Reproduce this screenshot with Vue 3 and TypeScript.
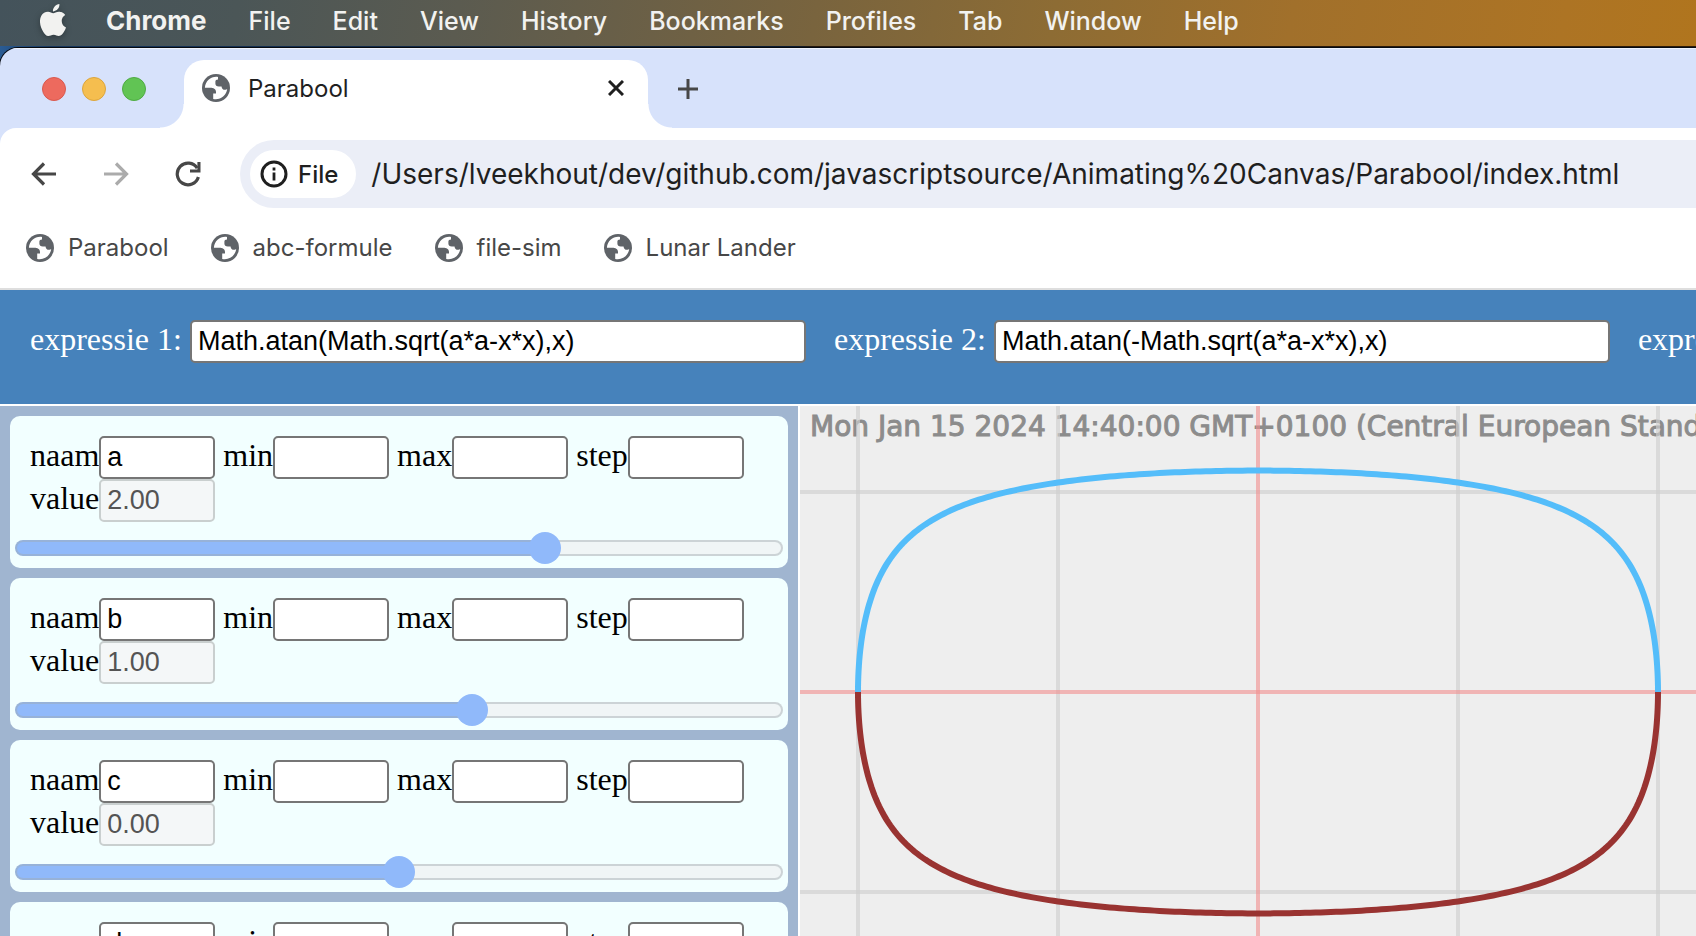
<script setup lang="ts">
import { ref, computed } from 'vue'

interface Param {
  naam: string
  value: number
}

const menus = ['File', 'Edit', 'View', 'History', 'Bookmarks', 'Profiles', 'Tab', 'Window', 'Help']
const bookmarks = ['Parabool', 'abc-formule', 'file-sim', 'Lunar Lander']
const url = ref('/Users/lveekhout/dev/github.com/javascriptsource/Animating%20Canvas/Parabool/index.html')
const expressions = ref<string[]>(['Math.atan(Math.sqrt(a*a-x*x),x)', 'Math.atan(-Math.sqrt(a*a-x*x),x)', ''])
const params = ref<Param[]>([
  { naam: 'a', value: 2 },
  { naam: 'b', value: 1 },
  { naam: 'c', value: 0 },
  { naam: 'd', value: 0 },
])
const timestamp = 'Mon Jan 15 2024 14:40:00 GMT+0100 (Central European Standard Time)'

const originX = 458
const originY = 286
const unit = 200
const steps = [-2, -1, 1, 2]

function curve(sign: number, a: number): string {
  const points: string[] = []
  const count = 240
  for (let i = 0; i <= count; i++) {
    const t = Math.PI * (1 - i / count)
    const x = a * Math.cos(t)
    const y = sign * Math.atan(Math.abs(a * Math.sin(t)))
    points.push(`${(originX + x * unit).toFixed(2)},${(originY - y * unit).toFixed(2)}`)
  }
  return points.join(' ')
}

const upper = computed(() => curve(1, params.value[0].value))
const lower = computed(() => curve(-1, params.value[0].value))

function fill(value: number): Record<string, string> {
  return { '--fill': `${(value + 5) * 10}%` }
}
</script>

<template>
  <svg class="defs" aria-hidden="true">
    <symbol id="globe" viewBox="0 0 28 28">
      <circle cx="14" cy="14" r="14" fill="#5f6368" />
      <path
        fill="#fff"
        d="M16 3C9.500 2 3.500 6.500 2.900 13.800H8.500C11.200 13.800 14 15 14 18V19.600H11.200V24.900C18 26.500 24.500 21.500 25.200 15C24.800 15.200 22.400 16.800 20.600 14.900C19.800 14 19.600 13.200 19.600 12.600H16.800C14.600 12.600 13.400 11.200 13.400 9.800V7.400C13.400 6.400 14.400 5.800 16 5.600Z"
      />
    </symbol>
  </svg>
  <div class="desktop">
    <nav class="menubar" aria-label="Menu bar">
      <svg class="apple" viewBox="2.300 0 19.400 24" aria-label="Apple">
        <path
          d="M12.152 6.896c-.948 0-2.415-1.078-3.96-1.04-2.04.027-3.91 1.183-4.961 3.014-2.117 3.675-.546 9.103 1.519 12.09 1.013 1.454 2.208 3.09 3.792 3.039 1.52-.065 2.09-.987 3.935-.987 1.831 0 2.35.987 3.96.948 1.637-.026 2.676-1.48 3.676-2.948 1.156-1.688 1.636-3.325 1.662-3.415-.039-.013-3.182-1.221-3.22-4.857-.026-3.04 2.48-4.494 2.597-4.559-1.429-2.09-3.623-2.324-4.39-2.376-2-.156-3.675 1.09-4.61 1.09zM15.53 3.83c.843-1.012 1.4-2.427 1.245-3.83-1.207.052-2.662.805-3.532 1.818-.78.896-1.454 2.338-1.273 3.714 1.338.104 2.715-.688 3.559-1.701"
        />
      </svg>
      <div class="menus">
        <button class="menu app-name" type="button">Chrome</button>
        <button v-for="m in menus" :key="m" class="menu" type="button">{{ m }}</button>
      </div>
    </nav>

    <div class="backdrop">
      <div class="window">
        <header class="tabstrip">
          <div class="lights">
            <button type="button" class="light red" aria-label="Close window"></button>
            <button type="button" class="light yellow" aria-label="Minimize window"></button>
            <button type="button" class="light green" aria-label="Zoom window"></button>
          </div>
          <span class="flare left"></span>
          <div class="tab">
            <svg class="favicon" aria-hidden="true"><use href="#globe" /></svg>
            <span class="tab-title">Parabool</span>
            <button type="button" class="icon-button" aria-label="Close tab">
              <svg width="16" height="16" viewBox="0 0 16 16"><path d="M1 1L15 15M15 1L1 15" stroke="#1f1f1f" stroke-width="3" /></svg>
            </button>
          </div>
          <span class="flare right"></span>
          <button type="button" class="icon-button new-tab" aria-label="New tab">
            <svg width="20" height="20" viewBox="0 0 20 20"><path d="M10 0V20M0 10H20" stroke="#474747" stroke-width="3" /></svg>
          </button>
        </header>

        <div class="chrome-body">
          <div class="toolbar">
            <button type="button" class="icon-button" aria-label="Back">
              <svg width="26" height="24" viewBox="0 0 26 24"><path d="M25 12H3M13 1.500L2.500 12L13 22.500" fill="none" stroke="#474747" stroke-width="3.200" /></svg>
            </button>
            <button type="button" class="icon-button" aria-label="Forward" disabled>
              <svg width="26" height="24" viewBox="0 0 26 24"><path d="M1 12H23M13 1.500L23.500 12L13 22.500" fill="none" stroke="#ababab" stroke-width="3.200" /></svg>
            </button>
            <button type="button" class="icon-button" aria-label="Reload">
              <svg width="26" height="26" viewBox="0 0 26 26">
                <path d="M22.200 7.200A10.800 10.800 0 1 0 23.400 16" fill="none" stroke="#474747" stroke-width="3.200" />
                <path d="M25.500 1V11.500H15V8.500H22.400V1Z" fill="#474747" />
              </svg>
            </button>
            <div class="omnibox">
              <button type="button" class="chip">
                <svg width="28" height="28" viewBox="0 0 28 28">
                  <circle cx="14" cy="14" r="12" fill="none" stroke="#1f1f1f" stroke-width="3" />
                  <path d="M14 12.500V20.500M14 7.500V10.500" stroke="#1f1f1f" stroke-width="2.800" />
                </svg>
                <span>File</span>
              </button>
              <input v-model="url" class="url" type="text" aria-label="Address" />
            </div>
          </div>
          <nav class="bookmarks" aria-label="Bookmarks">
            <a v-for="b in bookmarks" :key="b" class="bookmark" href="#">
              <svg class="favicon" aria-hidden="true"><use href="#globe" /></svg>
              <span>{{ b }}</span>
            </a>
          </nav>
        </div>

        <main class="page">
          <section class="expressions">
            <label v-for="(_, i) in expressions" :key="i" class="expression">
              <span>expressie {{ i + 1 }}:</span>
              <input v-model="expressions[i]" class="field" type="text" />
            </label>
          </section>
          <div class="columns">
            <aside class="params">
              <form v-for="p in params" :key="p.naam" class="card" @submit.prevent>
                <div class="row">
                  <label>naam<input v-model="p.naam" class="field" type="text" /></label>
                  <label>min<input class="field" type="text" /></label>
                  <label>max<input class="field" type="text" /></label>
                  <label>step<input class="field" type="text" /></label>
                </div>
                <div class="row">
                  <label>value<input class="field" type="text" :value="p.value.toFixed(2)" disabled /></label>
                </div>
                <input
                  v-model.number="p.value"
                  class="slider"
                  type="range"
                  min="-5"
                  max="5"
                  step="0.01"
                  :aria-label="'value ' + p.naam"
                  :style="fill(p.value)"
                />
              </form>
            </aside>
            <svg class="plot" role="img" aria-label="Graph">
              <text class="stamp" x="10" y="30">{{ timestamp }}</text>
              <g class="grid">
                <line v-for="s in steps" :key="'v' + s" :x1="originX + s * unit" y1="0" :x2="originX + s * unit" y2="100%" />
                <line v-for="s in steps" :key="'h' + s" x1="0" :y1="originY + s * unit" x2="100%" :y2="originY + s * unit" />
              </g>
              <g class="axes">
                <line :x1="originX" y1="0" :x2="originX" y2="100%" />
                <line x1="0" :y1="originY" x2="100%" :y2="originY" />
              </g>
              <polyline class="curve upper" :points="upper" />
              <polyline class="curve lower" :points="lower" />
            </svg>
          </div>
        </main>
      </div>
    </div>
  </div>
</template>

<style>
html,
body {
  margin: 0;
  background: #fff;
}
</style>

<style scoped>
* {
  box-sizing: border-box;
}
.defs {
  display: none;
}
button {
  border: 0;
  padding: 0;
  background: none;
  font: inherit;
  color: inherit;
}
.desktop {
  display: flex;
  flex-direction: column;
  height: 100vh;
  overflow: hidden;
  font-family: Inter, "Liberation Sans", sans-serif;
}
.menubar {
  display: flex;
  align-items: center;
  flex: none;
  gap: 40px;
  height: 46px;
  padding: 0 40px 6px;
  overflow: hidden;
  background: linear-gradient(100deg, #44535b 0%, #4b5657 14%, #5b5b50 27%, #79643e 48%, #8d6c34 62%, #a1702b 76%, #ad7424 92%, #b0751e 100%);
  color: #f2f2f0;
  font-size: 25px;
  font-weight: 500;
  text-shadow: 0 2px 6px rgba(0, 0, 0, 0.3);
}
.apple {
  flex: none;
  width: 26px;
  height: 32px;
  fill: #f2f2f0;
  filter: drop-shadow(0 2px 3px rgba(0, 0, 0, 0.3));
}
.menus {
  display: flex;
  align-items: baseline;
  gap: 42px;
}
.app-name {
  font-size: 26px;
  font-weight: 700;
}
.backdrop {
  display: flex;
  flex: 1;
  min-height: 0;
  padding-top: 2px;
  background: linear-gradient(90deg, #2a5c94 0, #17365c 3%, #0b1a2e 47%, #25170b 48%, #2c1a08 100%);
}
.window {
  display: flex;
  flex: 1;
  flex-direction: column;
  min-width: 0;
  overflow: hidden;
  border-top-left-radius: 18px;
  background: #d7e2fb;
  box-shadow: 0 0 0 1px #050a12;
}
.tabstrip {
  display: flex;
  flex: none;
  align-items: flex-end;
  height: 80px;
  border-top: 1px solid #eff3fd;
}
.lights {
  display: flex;
  gap: 16px;
  align-self: center;
  padding: 0 14px 0 42px;
}
.light {
  width: 24px;
  height: 24px;
  border-radius: 50%;
}
.red {
  background: #ed6a5e;
  border: 1px solid #d9594e;
}
.yellow {
  background: #f5be4f;
  border: 1px solid #dca53c;
}
.green {
  background: #61c454;
  border: 1px solid #4fab43;
}
.flare {
  flex: none;
  width: 24px;
  height: 24px;
}
.flare.left {
  background: radial-gradient(circle at 0 0, transparent 23px, #fff 24px);
}
.flare.right {
  background: radial-gradient(circle at 100% 0, transparent 23px, #fff 24px);
}
.tab {
  display: flex;
  align-items: center;
  width: 464px;
  height: 68px;
  padding: 0 24px 12px 18px;
  border-radius: 20px 20px 0 0;
  background: #fff;
  color: #1f1f1f;
  font-size: 24px;
}
.favicon {
  flex: none;
  width: 28px;
  height: 28px;
}
.tab-title {
  flex: 1;
  margin-left: 18px;
}
.icon-button {
  display: flex;
  align-items: center;
  justify-content: center;
}
.new-tab {
  align-self: center;
  margin-left: 6px;
}
.chrome-body {
  flex: none;
  height: 162px;
  border-top-left-radius: 16px;
  border-bottom: 2px solid #dedede;
  background: #fff;
}
.toolbar {
  display: flex;
  align-items: center;
  gap: 46px;
  height: 92px;
  padding-left: 31px;
}
.omnibox {
  display: flex;
  flex: 1;
  align-items: center;
  gap: 15px;
  min-width: 0;
  height: 68px;
  margin-left: -7px;
  padding-left: 10px;
  border-radius: 34px 0 0 34px;
  background: #ebeef7;
  color: #1f1f1f;
}
.chip {
  display: flex;
  flex: none;
  align-items: center;
  gap: 10px;
  height: 48px;
  padding: 0 18px 0 10px;
  border-radius: 24px;
  background: #fff;
  font-size: 24px;
  font-weight: 500;
}
.url {
  flex: 1;
  min-width: 0;
  padding: 0;
  border: 0;
  outline: 0;
  background: none;
  color: inherit;
  font: inherit;
  font-size: 28px;
}
.bookmarks {
  display: flex;
  gap: 42px;
  padding: 13px 26px;
}
.bookmark {
  display: flex;
  align-items: center;
  gap: 14px;
  color: #474747;
  font-size: 24px;
  line-height: 30px;
  text-decoration: none;
}
.page {
  display: flex;
  flex: 1;
  flex-direction: column;
  gap: 2px;
  min-height: 0;
  background: #fff;
  font-family: "Liberation Serif", "Times New Roman", serif;
  font-size: 32px;
}
.expressions {
  display: flex;
  flex: none;
  gap: 28px;
  height: 114px;
  padding: 30px;
  overflow: hidden;
  background: #4682bb;
  color: #fff;
}
.expression {
  display: flex;
  flex: none;
  align-items: baseline;
  gap: 8px;
  height: 43px;
}
.field {
  width: 116px;
  height: 43px;
  padding: 2px 6px;
  border: 2px solid #767676;
  border-radius: 5px;
  background: #fff;
  color: #000;
  font-family: "Liberation Sans", Arial, sans-serif;
  font-size: 27px;
}
.field:disabled {
  border-color: #c9cfcf;
  background: #f4f7f8;
  color: #545454;
}
.expression .field {
  width: 616px;
}
.columns {
  display: grid;
  flex: 1;
  grid-template-columns: 798px minmax(0, 1fr);
  gap: 2px;
  min-height: 0;
}
.params {
  display: flex;
  flex-direction: column;
  gap: 10px;
  padding: 10px;
  overflow: hidden;
  background: #a0b5d0;
}
.card {
  flex: none;
  padding: 20px 5px 4px;
  border-radius: 10px;
  background: #f2ffff;
}
.row {
  display: flex;
  gap: 8px;
  padding-left: 15px;
}
.row label {
  display: flex;
  align-items: baseline;
  height: 43px;
  white-space: nowrap;
}
.slider {
  display: block;
  width: 100%;
  height: 32px;
  margin: 10px 0 0;
  appearance: none;
  background: none;
}
.slider::-webkit-slider-runnable-track {
  height: 16px;
  border: 2px solid rgba(160, 170, 175, 0.45);
  border-radius: 8px;
  background: linear-gradient(90deg, #90b9fa var(--fill), #f0f5f6 var(--fill)) border-box;
}
.slider::-webkit-slider-thumb {
  width: 32px;
  height: 32px;
  margin-top: -10px;
  appearance: none;
  border-radius: 50%;
  background: #90b9fa;
}
.plot {
  display: block;
  width: 100%;
  height: 100%;
  background: #eee;
}
.stamp {
  fill: #8c8c8c;
  stroke: #8c8c8c;
  stroke-width: 1px;
  font-family: Verdana, "DejaVu Sans", sans-serif;
  font-size: 28px;
}
.grid line {
  stroke: #d0d0d0;
  stroke-opacity: 0.65;
  stroke-width: 4px;
}
.axes line {
  stroke: #f28e8e;
  stroke-opacity: 0.6;
  stroke-width: 4px;
}
.curve {
  fill: none;
  stroke-width: 6px;
}
.upper {
  stroke: #54bdfa;
}
.lower {
  stroke: #993331;
}
</style>
